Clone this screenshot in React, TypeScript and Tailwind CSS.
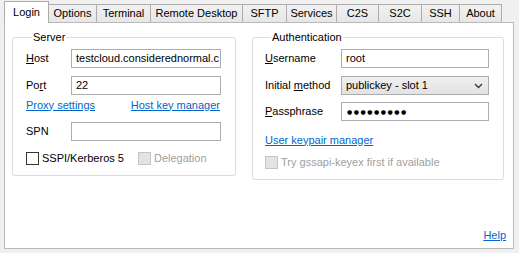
import React from "react";

const tabs: { label: string; w: string }[] = [
  { label: "Options", w: "w-[48px]" },
  { label: "Terminal", w: "w-[54px]" },
  { label: "Remote Desktop", w: "w-[92px]" },
  { label: "SFTP", w: "w-[44px]" },
  { label: "Services", w: "w-[50px]" },
  { label: "C2S", w: "w-[42px]" },
  { label: "S2C", w: "w-[43px]" },
  { label: "SSH", w: "w-[38px]" },
  { label: "About", w: "w-[42px]" },
];

function Input({ value, className = "" }: { value?: React.ReactNode; className?: string }) {
  return (
    <div
      className={`h-[19px] border border-[#abadb3] bg-white flex items-center pl-[4px] overflow-hidden whitespace-nowrap ${className}`}
    >
      {value}
    </div>
  );
}

function Check({ disabled = false }: { disabled?: boolean }) {
  return (
    <span
      className={`inline-block w-[13px] h-[13px] border ${
        disabled ? "border-[#c5c5c5] bg-[#e3e3e3]" : "border-[#333333] bg-white"
      }`}
    />
  );
}

export default function App() {
  return (
    <div className="w-[519px] h-[253px] bg-[#f0f0f0] font-['Liberation_Sans',Arial,sans-serif] text-[11px] text-black leading-[13px]">
      <div className="flex items-end h-[22px] pl-[4px] relative z-10">
        <div className="h-[22px] w-[45px] mb-[-1px] bg-white border-t border-l border-r border-[#acacac] flex items-center justify-center pb-[1px]">
          Login
        </div>
        {tabs.map((t) => (
          <div
            key={t.label}
            className={`h-[18px] ${t.w} border-t border-r border-[#acacac] bg-gradient-to-b from-[#f2f2f2] to-[#e6e6e6] flex items-center justify-center`}
          >
            {t.label}
          </div>
        ))}
      </div>
      <div className="ml-[4px] w-[510px] h-[227px] border border-[#b9b9b9] bg-white flex flex-col">
        <div className="flex pl-[7px] pt-[8px] gap-[16px]">
          <fieldset className="w-[224px] h-[145px] border border-[#dcdcdc] rounded-[3px] pl-[13px] pt-[5px]">
            <legend className="ml-[6px] px-[1px] leading-[13px]">Server</legend>
            <div className="flex items-center">
              <span className="w-[45px]">
                <u>H</u>ost
              </span>
              <Input className="w-[150px]" value="testcloud.considerednormal.c" />
            </div>
            <div className="flex items-center mt-[8px]">
              <span className="w-[45px]">
                Po<u>r</u>t
              </span>
              <Input className="w-[150px]" value="22" />
            </div>
            <div className="flex justify-between w-[194px] mt-[3px] h-[14px] items-center text-[#0066cc] underline">
              <span>Proxy settings</span>
              <span>Host key manager</span>
            </div>
            <div className="flex items-center mt-[10px]">
              <span className="w-[45px]">SPN</span>
              <Input className="w-[150px]" />
            </div>
            <div className="flex items-center mt-[11px] h-[13px]">
              <Check />
              <span className="ml-[3px]">SSPI/Kerberos 5</span>
              <span className="ml-[14px] flex items-center">
                <Check disabled />
                <span className="ml-[3px] text-[#a0a0a0]">Delegation</span>
              </span>
            </div>
          </fieldset>
          <fieldset className="w-[252px] h-[149px] border border-[#dcdcdc] rounded-[3px] pl-[12px] pt-[5px]">
            <legend className="ml-[6px] px-[1px] leading-[13px]">Authentication</legend>
            <div className="flex items-center">
              <span className="w-[76px]">
                <u>U</u>sername
              </span>
              <Input className="w-[148px]" value="root" />
            </div>
            <div className="flex items-center mt-[8px]">
              <span className="w-[76px]">
                Initial <u>m</u>ethod
              </span>
              <div className="w-[148px] h-[19px] border border-[#acacac] bg-gradient-to-b from-[#f0f0f0] to-[#e2e2e2] flex items-center pl-[4px] justify-between pr-[5px]">
                <span>publickey - slot 1</span>
                <svg width="9" height="6" viewBox="0 0 9 6">
                  <path d="M1 1 L4.5 4.5 L8 1" fill="none" stroke="#333" strokeWidth="1.3" />
                </svg>
              </div>
            </div>
            <div className="flex items-center mt-[7px]">
              <span className="w-[76px]">
                <u>P</u>assphrase
              </span>
              <Input
                className="w-[148px] border-[#7eb4ea]"
                value={
                  <span className="font-['DejaVu_Sans',sans-serif] text-[6px] tracking-[1.5px] pl-[1px]">
                    ●●●●●●●●●
                  </span>
                }
              />
            </div>
            <div className="mt-[12px] h-[14px] flex items-center text-[#0066cc] underline">
              User keypair manager
            </div>
            <div className="flex items-center mt-[9px] h-[13px]">
              <Check disabled />
              <span className="ml-[3px] text-[#a0a0a0]">Try gssapi-keyex first if available</span>
            </div>
          </fieldset>
        </div>
        <div className="flex-1" />
        <div className="flex justify-end pr-[7px] pb-[6px]">
          <span className="text-[#0066cc] underline">Help</span>
        </div>
      </div>
    </div>
  );
}
